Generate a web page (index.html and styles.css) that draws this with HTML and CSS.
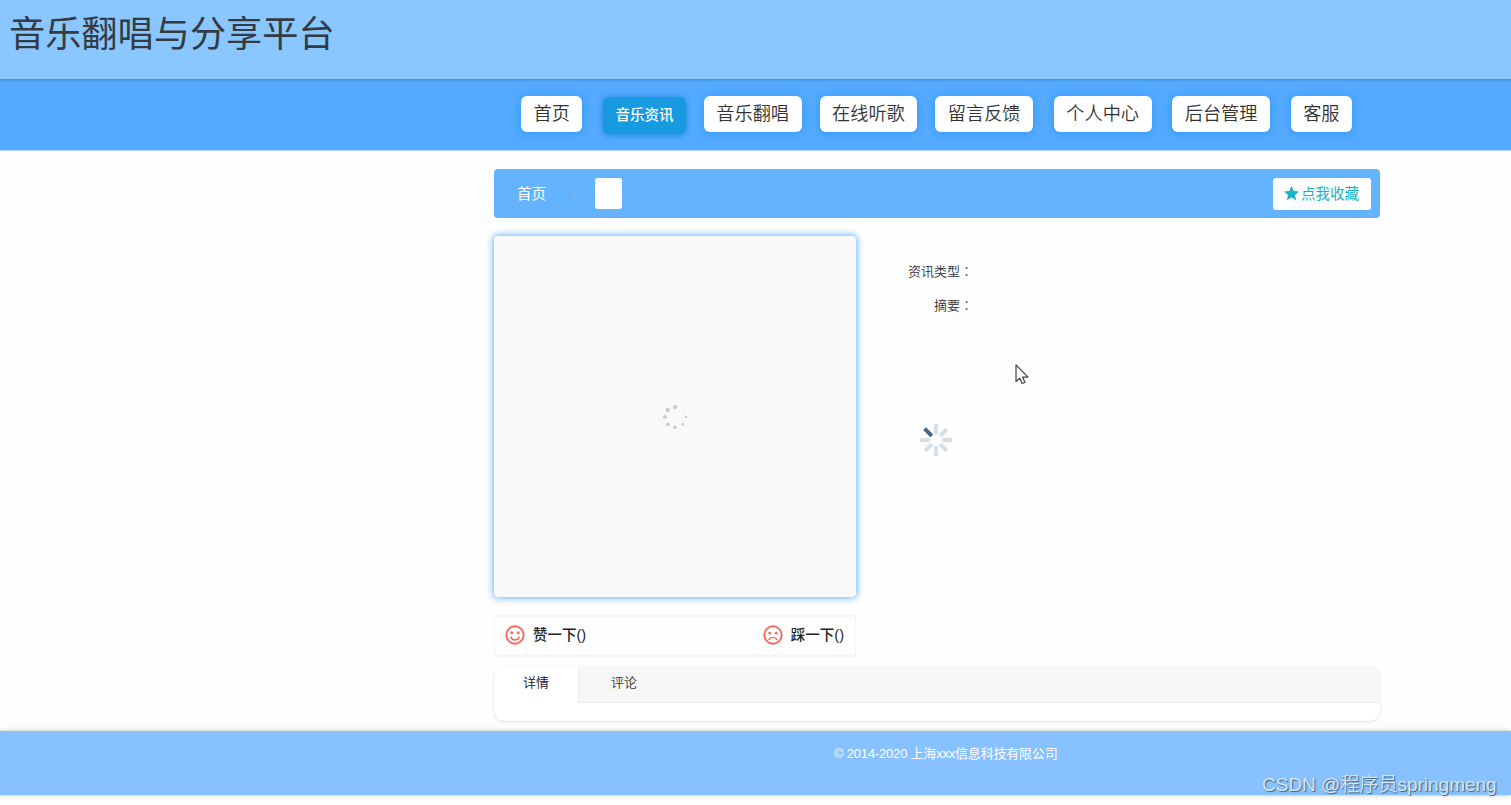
FILE: index.html
```html
<!DOCTYPE html>
<html lang="zh-CN">
<head>
<meta charset="utf-8">
<title>音乐翻唱与分享平台</title>
<link rel="stylesheet" href="styles.css">
</head>
<body>
<header class="header"><h1 class="title">音乐翻唱与分享平台</h1></header>
<nav class="nav">
  <a class="nav-item">首页</a>
  <a class="nav-item nav-active">音乐资讯</a>
  <a class="nav-item">音乐翻唱</a>
  <a class="nav-item">在线听歌</a>
  <a class="nav-item">留言反馈</a>
  <a class="nav-item gap-wide">个人中心</a>
  <a class="nav-item gap-wide">后台管理</a>
  <a class="nav-item gap-wide">客服</a>
</nav>
<main class="main">
  <div class="crumbs">
    <span class="crumb-home">首页</span>
    <span class="crumb-sep">/</span>
    <span class="crumb-current"></span>
    <a class="favorite">
      <svg width="15" height="15" viewBox="0 0 15 15"><path fill="#18b3c8" d="M7.5 0l2.2 4.9 5.3.5-4 3.5 1.2 5.3-4.7-2.8-4.7 2.8L4 8.900 0 5.400l5.300-.5z"/></svg>
      <span>点我收藏</span>
    </a>
  </div>
  <div class="detail">
    <div class="cover">
      <svg width="26" height="26" viewBox="0 0 26 26" fill="#ccc">
        <circle cx="13" cy="3" r="2.2"/><circle cx="5.7" cy="6" r="2.2"/><circle cx="3" cy="13" r="2.1"/><circle cx="5.7" cy="20.3" r="1.9"/><circle cx="13" cy="23.3" r="1.7"/><circle cx="20.7" cy="20.5" r="1.4"/><circle cx="24" cy="13" r="1.2"/><circle cx="22" cy="6.3" r=".8" opacity=".6"/>
      </svg>
    </div>
    <div class="info">
      <div class="field">资讯类型<span class="colon" lang="zh-TW">：</span></div>
      <div class="field">摘要<span class="colon" lang="zh-TW">：</span></div>
      <svg class="loader" width="34" height="34" viewBox="-17 -17 34 34" stroke="#d5dfe8" stroke-width="4">
        <path d="M0-6v-10M0 6v10M6 0h10M-6 0h-10M4.2-4.2l6.600-6.600M4.200 4.200l6.600 6.600M-4.200 4.200l-6.600 6.600"/>
        <path stroke="#4a6781" d="M-4.200-4.200l-7.200-7.200"/>
      </svg>
    </div>
  </div>
  <div class="votes">
    <span class="vote">
      <svg width="20" height="20" viewBox="0 0 20 20" fill="none" stroke="#f0695d" stroke-width="1.9"><circle cx="10" cy="10" r="8.7"/><path stroke-linecap="round" stroke-width="1.6" d="M6 12.2c1.4 3.6 6.6 3.6 8 0"/><g fill="#f0695d" stroke="none"><circle cx="6.8" cy="7.7" r="1.5"/><circle cx="13.2" cy="7.7" r="1.5"/></g></svg>
      <span>赞一下()</span>
    </span>
    <span class="vote">
      <svg width="20" height="20" viewBox="0 0 20 20" fill="none" stroke="#f0695d" stroke-width="1.9"><circle cx="10" cy="10" r="8.7"/><path stroke-linecap="round" stroke-width="1.4" d="M6 14.6c1.4-3 6.6-3 8 0"/><g fill="#f0695d" stroke="none"><circle cx="6.8" cy="8.2" r="1.4"/><circle cx="13.2" cy="8.2" r="1.4"/></g></svg>
      <span>踩一下()</span>
    </span>
  </div>
  <section class="tabs">
    <div class="tab-bar"><span class="tab tab-active">详情</span><span class="tab">评论</span></div>
  </section>
</main>
<footer class="footer"><span class="copyright">© 2014-2020 上海xxx信息科技有限公司</span></footer>
<div class="watermark">CSDN @程序员springmeng</div>
<svg class="cursor" width="14" height="21" viewBox="0 0 14 21"><path fill="#fff" stroke="#444" stroke-width="1.2" stroke-linejoin="round" d="M1 1v16.500l3.700-3.300 2.500 5.300 2.800-1.300-2.500-5.100H13z"/></svg>
</body>
</html>
```
FILE: styles.css
```css
* { box-sizing: border-box; }
body {
  margin: 0;
  height: 805px;
  overflow: hidden;
  position: relative;
  background: #fefefe;
  color: #333;
  font: 350 13px/20px "Liberation Sans", "Noto Sans CJK SC", sans-serif;
}
svg { display: block; flex: none; }
.header { height: 79px; padding: 9px 9px; background: #8ac6ff; }
.title { margin: 0; font-size: 36.2px; line-height: 52px; font-weight: 400; color: #333b43; }
.nav {
  display: flex;
  align-items: flex-start;
  height: 72px;
  padding: 17px 0 0 521px;
  background: linear-gradient(#438fd8, #54aaff 3px);
  border-bottom: 1px solid #b8dbff;
}
.nav-item {
  height: 36px;
  margin-right: 18px;
  padding: 0 12.5px;
  border-radius: 6px;
  background: #fff;
  box-shadow: 0 1px 8px #2b98ff;
  font-size: 18.2px;
  line-height: 37px;
  white-space: nowrap;
}
.nav-item:first-child { margin-right: 21px; }
.nav-active {
  height: 37px;
  margin-top: 1px;
  padding: 0 12.2px;
  background: #189ae0;
  box-shadow: 0 1px 6px #1488dc;
  color: #fff;
  font-size: 14.5px;
  font-weight: 500;
}
.gap-wide { margin-left: 2.7px; }
.main { width: 886px; margin: 18px 0 0 494px; }
.crumbs {
  display: flex;
  align-items: center;
  height: 49px;
  padding: 0 9px 0 23px;
  border-radius: 4px;
  background: #64b3ff;
  font-size: 14.5px;
}
.crumb-home { width: 52px; color: #fff; font-weight: 400; }
.crumb-sep { width: 26px; color: #859fc4; font-size: 12px; }
.crumb-current { width: 27px; height: 31px; border-radius: 3px; background: #fff; }
.favorite {
  display: flex;
  align-items: center;
  gap: 2px;
  width: 98px;
  height: 32px;
  margin-left: auto;
  padding-left: 11px;
  border-radius: 3px;
  background: #fff;
  color: #18b3c8;
  font-weight: 400;
  white-space: nowrap;
}
.detail { display: flex; margin-top: 18px; }
.cover {
  display: grid;
  place-items: center;
  width: 362px;
  height: 361px;
  border-radius: 4px;
  background: #f9f9f9;
  box-shadow: 0 0 7px 1px #62b5ff;
}
.info { width: 120px; padding: 19px 0 0 1px; }
.field { height: 34px; padding-right: 3px; line-height: 34px; text-align: right; }
.colon { font-family: "Noto Sans CJK TC", sans-serif; line-height: 1; }
.loader { margin: 100px 0 0 62px; }
.votes {
  display: flex;
  align-items: center;
  justify-content: space-between;
  width: 362px;
  height: 42px;
  margin-top: 18px;
  padding: 0 11px 2px 10px;
  border: 2px dotted #eee;
  border-width: 2px 1px;
}
.vote { display: flex; align-items: center; gap: 8px; color: #222; font-size: 14.5px; font-weight: 500; }
.tabs {
  height: 55px;
  margin-top: 9px;
  overflow: hidden;
  border-radius: 11px;
  background: #fff;
  box-shadow: 0 1px 3px #ddd;
}
.tab-bar { display: flex; height: 37px; background: #f7f7f7; border-bottom: 1px solid #eee; }
.tab { width: 90px; line-height: 34px; text-align: center; }
.tab-active { width: 85px; height: 37px; background: #fff; border-right: 1px solid #eee; color: #111; }
.footer {
  height: 64px;
  margin-top: 10px;
  padding: 12px 0 0 834px;
  background: #87c1ff;
  box-shadow: 0 0 4px #b5bcc3;
  color: #fff;
  line-height: 21px;
}
.copyright { white-space: nowrap; font-weight: 400; letter-spacing: -.2px; }
.watermark {
  position: absolute;
  top: 771px;
  left: 1262px;
  color: #d9e5f0;
  font-size: 19px;
  line-height: 28px;
  text-shadow: 1px 1px 1px #3f5d7b;
  white-space: nowrap;
}
.cursor { position: absolute; top: 364px; left: 1015px; }
```
